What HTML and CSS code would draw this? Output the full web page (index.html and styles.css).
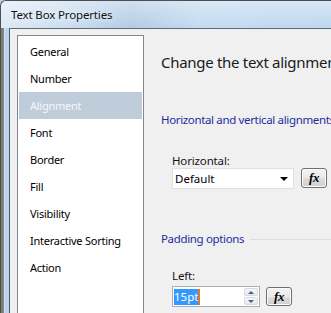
FILE: index.html
```html
<!DOCTYPE html>
<html>
<head>
<meta charset="utf-8">
<link rel="stylesheet" href="styles.css">
</head>
<body>
<div class="window">
  <div class="titlebar"><span class="title">Text Box Properties</span></div>
  <div class="frame">
    <div class="frame-left"></div>
    <div class="client">
      <ul class="nav">
        <li>General</li>
        <li>Number</li>
        <li class="selected">Alignment</li>
        <li>Font</li>
        <li>Border</li>
        <li>Fill</li>
        <li>Visibility</li>
        <li>Interactive Sorting</li>
        <li>Action</li>
      </ul>
      <div class="panel">
        <div class="heading">Change the text alignment and padding options.</div>
        <div class="group-title">Horizontal and vertical alignments</div>
        <div class="field">
          <div class="label">Horizontal:</div>
          <div class="row">
            <div class="select"><span>Default</span><span class="arrow"></span></div>
            <button class="fx"><i>fx</i></button>
          </div>
        </div>
        <div class="group-title with-line"><span>Padding options</span><span class="rule"></span></div>
        <div class="field field-left">
          <div class="label">Left:</div>
          <div class="row">
            <div class="spin">
              <span class="value"><span class="sel">15pt</span><span class="caret"></span></span>
              <span class="spin-btns">
                <span class="sb up"></span>
                <span class="sb down"></span>
              </span>
            </div>
            <button class="fx fx-small"><i>fx</i></button>
          </div>
        </div>
      </div>
    </div>
  </div>
</div>
</body>
</html>
```
FILE: styles.css
```css
html, body {
  margin: 0;
  padding: 0;
  width: 331px;
  height: 313px;
  overflow: hidden;
  background: #b7d3ec;
}
.window {
  width: 331px;
  height: 313px;
  display: flex;
  flex-direction: column;
  font-family: "Noto Sans", sans-serif;
  font-size: 12px;
  color: #000;
  border-top: 1px solid #4a4f56;
  border-left: 1px solid #4a4f56;
  border-top-left-radius: 6px;
  box-sizing: border-box;
  background: linear-gradient(90deg, #d9e7f4 0px, #c6dcf0 60px, #a9c6e0 130px, #bcd6ee 200px, #b6d3ee 331px);
  overflow: hidden;
}
.titlebar {
  height: 27px;
  flex: none;
  display: flex;
  align-items: center;
  padding-left: 10px;
  background: linear-gradient(180deg, rgba(255,255,255,0.45) 0%, rgba(255,255,255,0.1) 100%);
}
.title {
  font-size: 11.5px;
  color: #111;
  letter-spacing: -0.15px;
  text-shadow: 0 0 6px rgba(255,255,255,0.9);
}
.frame {
  flex: 1;
  display: flex;
  min-height: 0;
}
.frame-left {
  width: 8px;
  flex: none;
  background: linear-gradient(90deg, #7b7770 0px, #8a8680 3px, #d7dde3 3px, #d7dde3 4px, #b8d6f0 4px, #b8d6f0 8px);
}
.client {
  flex: 1;
  display: flex;
  background: #f0f0f0;
  border-left: 1px solid #4f5963;
  border-top: 1px solid #5f6a75;
  padding: 6px 0 0 7px;
  min-width: 0;
}
.nav {
  list-style: none;
  margin: 0;
  padding: 2px 1px 0 1px;
  width: 123px;
  flex: none;
  background: #fff;
  border: 1px solid #828790;
  border-bottom: none;
}
.nav li {
  height: 27px;
  line-height: 27px;
  padding-left: 11px;
  font-size: 11px;
  letter-spacing: -0.25px;
  white-space: nowrap;
}
.nav li.selected {
  background: #bfcddb;
  color: #f4f6f8;
}
.panel {
  flex: 1;
  padding-left: 17px;
  white-space: nowrap;
  overflow: hidden;
  min-width: 0;
}
.heading {
  font-size: 15px;
  color: #1a1a1a;
  margin-top: 16px;
  height: 22px;
  line-height: 22px;
  letter-spacing: -0.3px;
}
.group-title {
  color: #1e2d9c;
  font-size: 11.5px;
  margin-top: 39px;
  height: 16px;
  line-height: 16px;
  letter-spacing: -0.35px;
}
.group-title.with-line {
  display: flex;
  align-items: center;
  margin-top: 42px;
}
.rule {
  flex: 1;
  height: 1px;
  background: #d5dfe5;
  margin-left: 6px;
}
.field {
  padding-left: 11px;
  margin-top: 26px;
}
.field-left {
  margin-top: 21px;
}
.label {
  font-size: 11.5px;
  height: 14px;
  line-height: 14px;
  color: #1a1010;
  letter-spacing: -0.15px;
}
.field-left .label {
  height: 16px;
  line-height: 16px;
}
.row {
  display: flex;
  align-items: flex-start;
  gap: 7px;
  margin-top: 0;
}
.field-left .row {
  margin-top: 2px;
  gap: 6px;
}
.select {
  width: 122px;
  height: 21px;
  box-sizing: border-box;
  border: 1px solid #dde1e6;
  background: #fff;
  display: flex;
  align-items: center;
  justify-content: space-between;
  padding: 0 5px 0 2px;
  font-size: 11.5px;
}
.arrow {
  width: 0;
  height: 0;
  border-left: 4px solid transparent;
  border-right: 4px solid transparent;
  border-top: 4px solid #000;
  margin-top: 1px;
}
.fx {
  width: 26px;
  height: 20px;
  box-sizing: border-box;
  border: 1px solid #707070;
  border-radius: 3px;
  background: linear-gradient(180deg, #f2f2f2 0%, #ebebeb 50%, #dddddd 51%, #cfcfcf 100%);
  padding: 0;
  margin: 0;
  display: flex;
  align-items: center;
  justify-content: center;
  font-family: "Liberation Serif", serif;
  font-weight: bold;
  font-size: 13px;
  color: #000;
  box-shadow: inset 0 0 0 1px #fcfcfc;
}
.fx i {
  letter-spacing: -0.5px;
}
.fx-small {
  margin-top: 1px;
  height: 19px;
}
.spin {
  width: 88px;
  height: 21px;
  box-sizing: border-box;
  border: 1px solid #abadb3;
  background: #fff;
  display: flex;
  align-items: stretch;
  justify-content: space-between;
  padding: 1px;
}
.value {
  display: flex;
  align-items: center;
  font-size: 11.5px;
}
.sel {
  background: #3399ff;
  color: #fff;
  line-height: 16px;
}
.caret {
  width: 2px;
  height: 16px;
  background: #e07a2a;
}
.spin-btns {
  width: 14px;
  display: flex;
  flex-direction: column;
  gap: 1px;
}
.sb {
  flex: 1;
  box-sizing: border-box;
  border: 1px solid #d6dbe2;
  border-radius: 2px;
  background: linear-gradient(180deg, #f5f7f9, #e4e8ee);
  display: flex;
  align-items: center;
  justify-content: center;
}
.sb::after {
  content: "";
  width: 0;
  height: 0;
  border-left: 3px solid transparent;
  border-right: 3px solid transparent;
}
.sb.up::after {
  border-bottom: 3px solid #4d6185;
}
.sb.down::after {
  border-top: 3px solid #4d6185;
}
```
